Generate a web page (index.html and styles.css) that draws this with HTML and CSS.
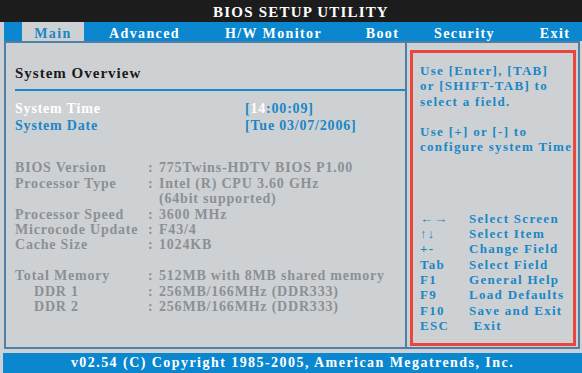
FILE: index.html
```html
<!DOCTYPE html>
<html lang="en">
<head>
    <meta charset="UTF-8">
    <title>BIOS Setup Utility</title>
    <link rel="stylesheet" href="styles.css">
</head>
<body>
    <div class="screen">
        <header class="title">BIOS SETUP UTILITY</header>

        <nav class="menu">
            <span class="tab active">Main</span>
            <span class="tab">Advanced</span>
            <span class="tab">H/W Monitor</span>
            <span class="tab">Boot</span>
            <span class="tab">Security</span>
            <span class="tab">Exit</span>
        </nav>

        <div class="main">
            <section class="left">
                <h1>System Overview</h1>
                <div class="rule"></div>

                <div class="setting selected">
                    <span class="name">System Time</span>
                    <span class="value">[<span class="cursor">14</span>:00:09]</span>
                </div>
                <div class="setting">
                    <span class="name">System Date</span>
                    <span class="value">[Tue 03/07/2006]</span>
                </div>

                <div class="info">
                    <span>BIOS Version</span><span>:</span><span>775Twins-HDTV BIOS P1.00</span>
                    <span>Processor Type</span><span>:</span><span>Intel (R) CPU 3.60 GHz</span>
                    <span></span><span></span><span>(64bit supported)</span>
                    <span>Processor Speed</span><span>:</span><span>3600 MHz</span>
                    <span>Microcode Update</span><span>:</span><span>F43/4</span>
                    <span>Cache Size</span><span>:</span><span>1024KB</span>
                </div>

                <div class="info memory">
                    <span>Total Memory</span><span>:</span><span>512MB with 8MB shared memory</span>
                    <span class="sub">DDR 1</span><span>:</span><span>256MB/166MHz (DDR333)</span>
                    <span class="sub">DDR 2</span><span>:</span><span>256MB/166MHz (DDR333)</span>
                </div>
            </section>

            <aside class="right">
                <div class="help">
                    <p>Use [Enter], [TAB]<br>or [SHIFT-TAB] to<br>select a field.</p>
                    <p class="gap">Use [+] or [-] to<br>configure system Time</p>

                    <div class="keys">
                        <span>&larr;&rarr;</span><span>Select Screen</span>
                        <span>&uarr;&darr;</span><span>Select Item</span>
                        <span>+-</span><span>Change Field</span>
                        <span>Tab</span><span>Select Field</span>
                        <span>F1</span><span>General Help</span>
                        <span>F9</span><span>Load Defaults</span>
                        <span>F10</span><span>Save and Exit</span>
                        <span>ESC</span><span>&nbsp;Exit</span>
                    </div>
                </div>
            </aside>
        </div>

        <footer class="footer">v02.54 (C) Copyright 1985-2005, American Megatrends, Inc.</footer>
    </div>
</body>
</html>
```

FILE: styles.css
```css
body {
    margin: 0;
    padding: 0;
    background-color: #ced1d4;
    font-family: "Liberation Serif", "Times New Roman", serif;
    font-weight: bold;
}
.screen {
    width: 582px;
    height: 373px;
    overflow: hidden;
}
.title {
    height: 22px;
    padding-left: 20px;
    background-color: #1c1c1c;
    color: white;
    font-size: 15px;
    letter-spacing: 1.2px;
    line-height: 24px;
    text-align: center;
}
.menu {
    display: grid;
    grid-template-columns: 62px 121px 137px 81px 83px 98px;
    height: 19px;
    margin-left: 4px;
    padding-left: 18px;
    background-color: #0b87cf;
}
.tab {
    color: white;
    font-size: 14px;
    letter-spacing: 1.4px;
    line-height: 23px;
    text-align: center;
    white-space: nowrap;
}
.tab.active {
    background-color: #ced1d4;
    color: #1a87c6;
}
.main {
    display: flex;
    width: 576px;
    height: 308px;
    margin-left: 4px;
}
.left {
    width: 390px;
    padding: 22px 0 0 9px;
    border: 2px solid #4f7fa4;
    border-right: none;
}
h1 {
    margin: 0;
    color: #1a1a1a;
    font-size: 15px;
    letter-spacing: 1px;
    line-height: 16px;
}
.rule {
    height: 2px;
    margin: 8px 0 10px;
    background-color: #1a87c6;
}
.setting {
    display: flex;
    color: #1a87c6;
    font-size: 14px;
    letter-spacing: 0.8px;
    line-height: 16.7px;
}
.setting .name {
    width: 230px;
}
.setting.selected .name {
    color: white;
}
.cursor {
    color: white;
}
.info {
    display: grid;
    grid-template-columns: 133px 11px auto;
    margin-top: 26px;
    color: #8b9095;
    font-size: 14px;
    letter-spacing: 0.8px;
    line-height: 15.4px;
    white-space: nowrap;
}
.info.memory {
    margin-top: 15.4px;
}
.info .sub {
    padding-left: 19px;
}
.right {
    width: 171px;
    border: 2px solid #4f7fa4;
}
.help {
    height: 280px;
    margin: 7px 2px 0 3px;
    padding: 10px 0 0 7px;
    border: 3px solid #e8473e;
    overflow: hidden;
    color: #1a87c6;
    font-size: 13px;
    letter-spacing: 1.3px;
    line-height: 15.3px;
    white-space: nowrap;
}
.help p {
    margin: 0;
}
.help p.gap {
    margin-top: 15.3px;
}
.keys {
    display: grid;
    grid-template-columns: 49px auto;
    margin-top: 56px;
}
.footer {
    height: 20px;
    margin: 4px 0 0 3px;
    background-color: #0b87cf;
    color: white;
    font-size: 14px;
    letter-spacing: 1.45px;
    line-height: 20px;
    text-align: center;
}
```
